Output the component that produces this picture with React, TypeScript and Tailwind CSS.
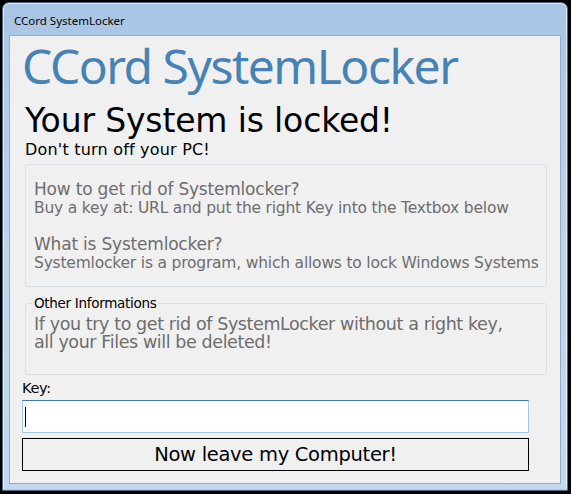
export default function App() {
  return (
    <div className="w-[571px] h-[494px] bg-black pt-[2px] pl-[2px] pr-[3px] pb-[3px]">
      <div className="flex h-full flex-col rounded-t-[7px] border border-[#52677f] bg-gradient-to-b from-[#a9c5e5] via-[#bcd4ee] to-[#c3d9f0] shadow-[inset_0_0_0_1px_rgba(255,255,255,0.6)]">
        {/* title bar */}
        <div className="flex h-[32px] items-center pl-[11px] pt-[4px] font-['Noto_Sans',sans-serif] text-[11.5px] text-black">
          CCord SystemLocker
        </div>

        {/* client area */}
        <div className="mx-[6px] flex-1 border border-[#93acc9] bg-[#f0f0f0] px-[12px] font-['DejaVu_Sans',sans-serif]">
          <h1 className="mt-[2px] font-['Noto_Sans',sans-serif] text-[48px] leading-[56px] tracking-[-1.5px] text-[#4682b4]">
            CCord SystemLocker
          </h1>

          <div className="mt-[7px] pl-[3px] text-[33px] leading-[39px] tracking-[-0.15px] text-black">
            Your System is locked!
          </div>
          <div className="pl-[3px] text-[16px] leading-[19px] tracking-[0.2px] text-black">
            Don't turn off your PC!
          </div>

          {/* info box */}
          <div className="mt-[5px] ml-[3px] mr-[1px] h-[123px] rounded-[3px] border border-[#d5dfe5] pl-[8px] pt-[14px] whitespace-nowrap text-[#6d6d6d]">
            <div className="text-[17px] leading-[20px] tracking-[-0.2px]">How to get rid of Systemlocker?</div>
            <div className="text-[15.5px] leading-[18px] tracking-[-0.2px]">
              Buy a key at: URL and put the right Key into the Textbox below
            </div>
            <div className="mt-[17px] text-[17px] leading-[20px] tracking-[-0.2px]">What is Systemlocker?</div>
            <div className="text-[15.5px] leading-[18px] tracking-[-0.2px]">
              Systemlocker is a program, which allows to lock Windows Systems
            </div>
          </div>

          {/* other informations group */}
          <div className="relative mt-[16px] ml-[3px] mr-[1px] h-[72px] rounded-[3px] border border-[#d5dfe5] px-[8px] pt-[11px] text-[#6d6d6d]">
            <span className="absolute -top-[9px] left-[6px] bg-[#f0f0f0] px-[2px] text-[13.5px] leading-[16px] tracking-[-0.3px] text-black">
              Other Informations
            </span>
            <div className="text-[17.5px] leading-[18px] tracking-[-0.4px]">
              If you try to get rid of SystemLocker without a right key,
              <br />
              all your Files will be deleted!
            </div>
          </div>

          <div className="mt-[4px] text-[14.5px] leading-[18px] tracking-[-0.3px] text-black">Key:</div>

          <div className="mt-[3px] mr-[19px] flex h-[33px] items-center border border-[#a4c9e3] border-t-[#3d7bad] bg-white pl-[2px]">
            <div className="h-[20px] w-[1px] bg-black" />
          </div>

          <button className="mt-[5px] flex h-[33px] w-[507px] items-center justify-center border border-black bg-[#f0f0f0] text-[19.5px] tracking-[-0.3px] text-black">
            Now leave my Computer!
          </button>
        </div>
        <div className="h-[6px] border-b border-[#9fd6ef]" />
      </div>
    </div>
  );
}
